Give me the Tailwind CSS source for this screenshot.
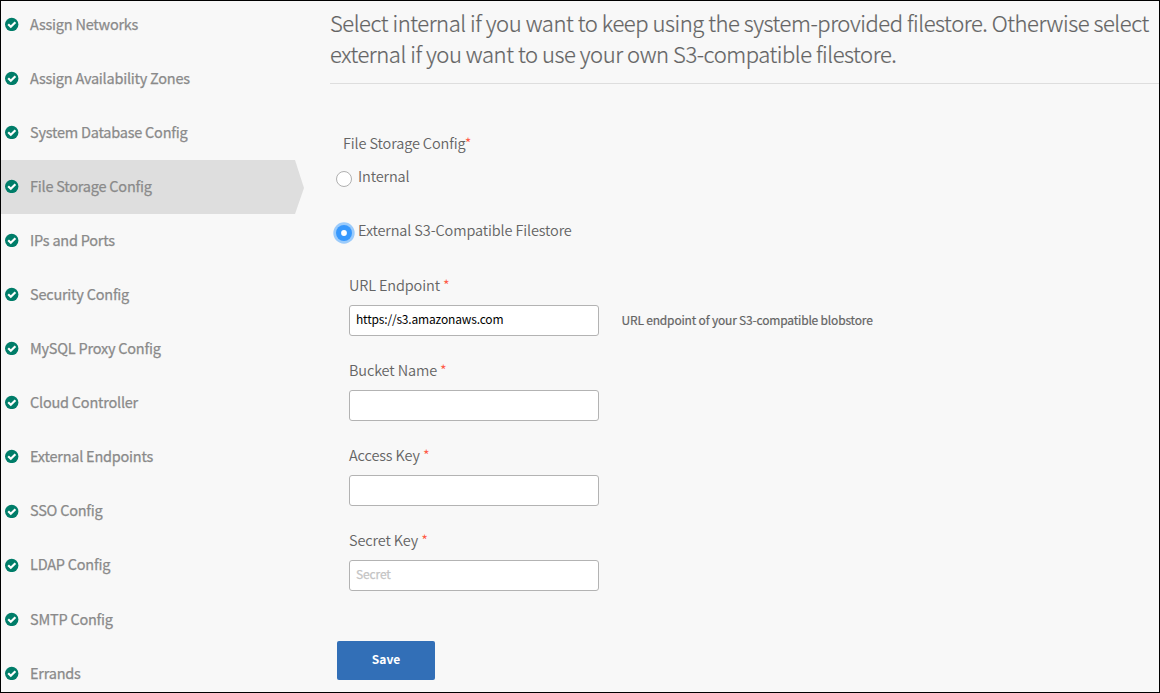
<!DOCTYPE html>
<html lang="en"><head><meta charset="utf-8"><title>File Storage Config</title>
<script src="https://cdn.jsdelivr.net/npm/@tailwindcss/browser@4"></script></head>
<body class="w-[1160px] h-[693px] overflow-hidden font-['Noto_Sans_CJK_SC','Noto_Sans',sans-serif]">
<svg class="hidden"><symbol id="check" viewBox="0 0 14 14"><circle cx="6.7" cy="7.4" r="6.7" fill="#007d69"/><path d="M3.2 7.2 5.8 9.8 10.4 5.2" fill="none" stroke="#fff" stroke-width="2.2"/></symbol></svg>
<div class="flex h-[693px] w-[1160px] overflow-hidden border border-black bg-[#f8f8f8]">
<nav class="w-[303px] shrink-0 text-[14.5px] tracking-[-0.23px] text-[#8a8a8a] [-webkit-text-stroke:0.25px]">
<ul class="-mt-[3px]">
<li class="flex h-[54px] items-center gap-[11px] pb-[2px] pl-[4px]"><svg class="size-[14px]"><use href="#check"/></svg><span>Assign Networks</span></li>
<li class="flex h-[54px] items-center gap-[11px] pb-[2px] pl-[4px]"><svg class="size-[14px]"><use href="#check"/></svg><span>Assign Availability Zones</span></li>
<li class="flex h-[54px] items-center gap-[11px] pb-[2px] pl-[4px]"><svg class="size-[14px]"><use href="#check"/></svg><span>System Database Config</span></li>
<li class="flex h-[54px] items-center gap-[11px] bg-[#dedede] pb-[2px] pl-[4px] [clip-path:polygon(0_0,294px_0,303px_52%,294px_100%,0_100%)]"><svg class="size-[14px]"><use href="#check"/></svg><span>File Storage Config</span></li>
<li class="flex h-[54px] items-center gap-[11px] pb-[2px] pl-[4px]"><svg class="size-[14px]"><use href="#check"/></svg><span>IPs and Ports</span></li>
<li class="flex h-[54px] items-center gap-[11px] pb-[2px] pl-[4px]"><svg class="size-[14px]"><use href="#check"/></svg><span>Security Config</span></li>
<li class="flex h-[54px] items-center gap-[11px] pb-[2px] pl-[4px]"><svg class="size-[14px]"><use href="#check"/></svg><span>MySQL Proxy Config</span></li>
<li class="flex h-[54px] items-center gap-[11px] pb-[2px] pl-[4px]"><svg class="size-[14px]"><use href="#check"/></svg><span>Cloud Controller</span></li>
<li class="flex h-[54px] items-center gap-[11px] pb-[2px] pl-[4px]"><svg class="size-[14px]"><use href="#check"/></svg><span>External Endpoints</span></li>
<li class="mt-px flex h-[54px] items-center gap-[11px] pb-[2px] pl-[4px]"><svg class="size-[14px]"><use href="#check"/></svg><span class="pb-[2px]">SSO Config</span></li>
<li class="flex h-[54px] items-center gap-[11px] pb-[2px] pl-[4px]"><svg class="size-[14px]"><use href="#check"/></svg><span class="pb-[2px]">LDAP Config</span></li>
<li class="flex h-[54px] items-center gap-[11px] pb-[2px] pl-[4px]"><svg class="size-[14px]"><use href="#check"/></svg><span>SMTP Config</span></li>
<li class="flex h-[54px] items-center gap-[11px] pb-[2px] pl-[4px]"><svg class="size-[14px]"><use href="#check"/></svg><span>Errands</span></li>
</ul></nav>
<main class="ml-[26px] flex-1 text-[#646464]">
<h1 class="h-[83px] whitespace-nowrap border-b border-[#dedede] pt-[6px] text-[22px] font-light leading-[31px] tracking-[-0.45px] [-webkit-text-stroke:0.2px]">Select internal if you want to keep using the system-provided filestore. Otherwise select<br>external if you want to use your own S3-compatible filestore.</h1>
<form class="pt-[47px] text-[14.5px] font-[350] leading-[24px] tracking-[-0.12px]">
<div class="pl-[13px]">File Storage Config<span class="text-[#ff5a45]">*</span></div>
<label class="mt-[9px] flex h-[24px] items-center pl-[3px]"><svg class="mt-[5px] size-[22px]" viewBox="0 0 22 22"><circle cx="11" cy="11" r="7.5" fill="#fff" stroke="#b0b0b0"/></svg><span class="ml-[3px]">Internal</span></label>
<label class="mt-[30px] flex h-[24px] items-center pl-[3px]"><svg class="mt-[5px] size-[22px]" viewBox="0 0 22 22"><circle cx="11" cy="11" r="10.7" fill="#9bcbfb"/><circle cx="11" cy="11" r="8" fill="#3798fd"/><circle cx="11" cy="11" r="2.9" fill="#fff"/></svg><span class="ml-[3px]">External S3-Compatible Filestore</span></label>
<div class="mt-[31px] flex flex-col gap-[22px] pl-[19px]">
<div><div>URL Endpoint <span class="text-[#ff5a45]">*</span></div><div class="mt-[8px] flex items-center gap-[22.5px] text-[12px] font-normal tracking-[-0.18px]"><div class="h-[31px] w-[250px] rounded-[3px] border border-[#b3b3b3] bg-white px-[6px] leading-[26px] text-black">https://s3.amazonaws.com</div><span class="pb-[2px] [-webkit-text-stroke:0.2px]">URL endpoint of your S3-compatible blobstore</span></div></div>
<div><div>Bucket Name <span class="text-[#ff5a45]">*</span></div><div class="mt-[8px] h-[31px] w-[250px] rounded-[3px] border border-[#b3b3b3] bg-white"></div></div>
<div><div>Access Key <span class="text-[#ff5a45]">*</span></div><div class="mt-[8px] h-[31px] w-[250px] rounded-[3px] border border-[#b3b3b3] bg-white"></div></div>
<div><div>Secret Key <span class="text-[#ff5a45]">*</span></div><div class="mt-[8px] h-[31px] w-[250px] rounded-[3px] border border-[#b3b3b3] bg-white px-[6px] text-[12px] font-normal leading-[26px] text-[#c4c4c4] [-webkit-text-stroke:0.25px]">Secret</div></div>
</div>
<button type="button" class="ml-[7px] mt-[50px] block h-[39px] w-[98px] rounded-[2px] bg-[#326fb7] pb-[4px] text-[12px] font-bold tracking-normal text-white">Save</button>
</form>
</main></div>
</body></html>
